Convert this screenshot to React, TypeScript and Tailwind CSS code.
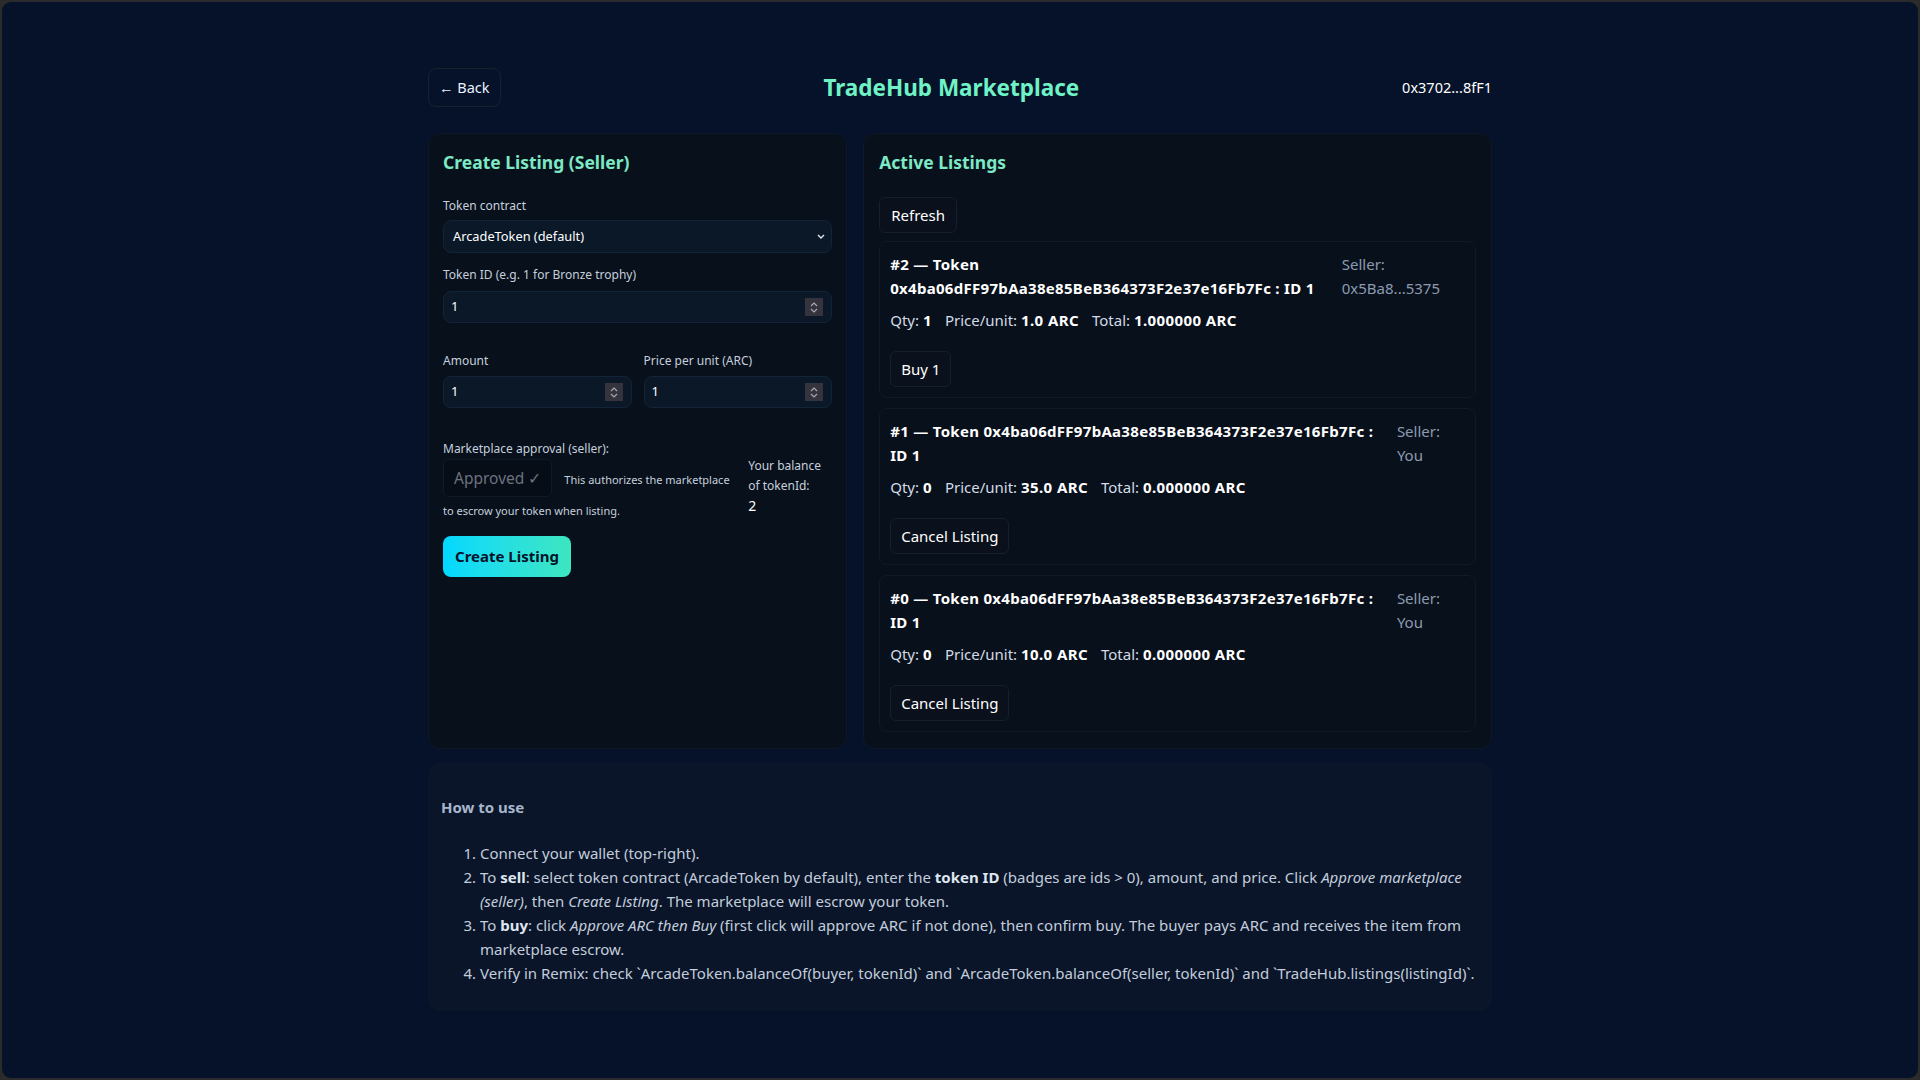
import React from "react";

function Spinner() {
  return (
    <div className="flex h-[18px] w-[18px] flex-col items-center justify-center gap-[1px] bg-[#35333d]">
      <svg width="8" height="5" viewBox="0 0 8 5" fill="none">
        <path d="M1 4L4 1L7 4" stroke="#a9a9b3" strokeWidth="1.2" />
      </svg>
      <svg width="8" height="5" viewBox="0 0 8 5" fill="none">
        <path d="M1 1L4 4L7 1" stroke="#a9a9b3" strokeWidth="1.2" />
      </svg>
    </div>
  );
}

function NumberField({ value }: { value: string }) {
  return (
    <div className="flex h-8 items-center rounded-lg border border-[#13243a] bg-[#0a1828] pl-[7px] pr-[8px]">
      <input
        readOnly
        value={value}
        className="w-full flex-1 bg-transparent text-[13px] text-white outline-none"
      />
      <Spinner />
    </div>
  );
}

type Listing = {
  id: number;
  qty: number;
  price: string;
  total: string;
  seller: string;
  action: string;
};

const listings: Listing[] = [
  { id: 2, qty: 1, price: "1.0", total: "1.000000", seller: "0x5Ba8...5375", action: "Buy 1" },
  { id: 1, qty: 0, price: "35.0", total: "0.000000", seller: "You", action: "Cancel Listing" },
  { id: 0, qty: 0, price: "10.0", total: "0.000000", seller: "You", action: "Cancel Listing" },
];

function ListingCard({ l }: { l: Listing }) {
  return (
    <div className="rounded-lg border border-[#101a28] bg-[#08101b] p-[10px]">
      <div className="flex gap-4">
        <div className="flex-1 text-[15px] font-bold leading-6 tracking-[0.3px] text-white">
          #{l.id} — Token 0x4ba06dFF97bAa38e85BeB364373F2e37e16Fb7Fc : ID 1
        </div>
        <div className="mr-[25px] text-[15px] leading-6 text-[#8d9bb0]">
          <div>Seller:</div>
          <div>{l.seller}</div>
        </div>
      </div>
      <div className="mt-2 flex text-[15px] leading-6 text-[#d3dbe6]">
        <span className="mr-[13px]">
          Qty: <b className="tracking-[0.4px] text-white">{l.qty}</b>
        </span>
        <span className="mr-[13px]">
          Price/unit: <b className="tracking-[0.4px] text-white">{l.price} ARC</b>
        </span>
        <span>
          Total: <b className="tracking-[0.4px] text-white">{l.total} ARC</b>
        </span>
      </div>
      <button className="mt-[19px] h-9 rounded-md border border-[#151f2e] bg-[#0b111c] px-[10px] text-[15px] text-white">
        {l.action}
      </button>
    </div>
  );
}

export default function App() {
  return (
    <div className="h-screen w-full bg-[#2b2b2b] p-[2px] font-['Noto_Sans',sans-serif]">
      <div className="h-full w-full overflow-hidden rounded-[9px] bg-[#061229]">
        <div className="mx-auto w-[1064px] pt-[66px]">
          {/* Header */}
          <div className="flex h-[39px] items-center justify-between">
            <button className="h-[39px] rounded-lg border border-[#16212f] px-[10px] text-[14.5px] text-[#e8f1ff]">
              ← Back
            </button>
            <h1 className="text-[22.5px] font-bold text-[#6ff3c6]">TradeHub Marketplace</h1>
            <div className="text-[14.5px] text-white">0x3702...8fF1</div>
          </div>

          <div className="mt-[26px] grid grid-cols-[2fr_3fr] gap-4">
            {/* Create listing */}
            <div className="rounded-xl border border-[#0e1826] bg-[#07101b] px-[14px] py-4">
              <h2 className="text-[17.5px] font-bold leading-6 text-[#7de9c5]">Create Listing (Seller)</h2>
              <div className="mt-[22px] text-[12px] leading-5 text-[#c6cfdb]">Token contract</div>
              <div className="mt-1 flex h-[33px] items-center justify-between rounded-lg border border-[#13243a] bg-[#0a1828] pl-[9px] pr-[6px]">
                <span className="text-[12.8px] text-white">ArcadeToken (default)</span>
                <svg width="8" height="5" viewBox="0 0 8 5" fill="none">
                  <path d="M1 1L4 4L7 1" stroke="#e5e7eb" strokeWidth="1.4" />
                </svg>
              </div>
              <div className="mt-3 text-[12px] leading-5 text-[#c6cfdb]">Token ID (e.g. 1 for Bronze trophy)</div>
              <div className="mt-[6px]">
                <NumberField value="1" />
              </div>
              <div className="mt-[28px] grid grid-cols-2 gap-3">
                <div>
                  <div className="text-[12px] leading-5 text-[#c6cfdb]">Amount</div>
                  <div className="mt-[5px]">
                    <NumberField value="1" />
                  </div>
                </div>
                <div>
                  <div className="text-[12px] leading-5 text-[#c6cfdb]">Price per unit (ARC)</div>
                  <div className="mt-[5px]">
                    <NumberField value="1" />
                  </div>
                </div>
              </div>

              <div className="mt-[31px] flex items-center gap-3">
                <div className="flex-1">
                  <div className="text-[12px] leading-5 text-[#c6cfdb]">Marketplace approval (seller):</div>
                  <div className="text-[11px] leading-5 text-[#c6cfdb]">
                    <button className="mb-[4px] mr-3 inline-block h-[38px] rounded-md border border-[#111a26] bg-[#070d16] px-[10px] text-[15.5px] text-[#6b7280]">
                      Approved ✓
                    </button>
                    This authorizes the marketplace to escrow your token when listing.
                  </div>
                </div>
                <div className="w-[84px] pt-[12px]">
                  <div className="text-[12px] leading-5 text-[#c6cfdb]">Your balance of tokenId:</div>
                  <div className="text-sm leading-5 text-white">2</div>
                </div>
              </div>

              <button className="mt-[15px] h-[41px] rounded-lg bg-gradient-to-r from-[#00d8ff] to-[#3de6c0] px-3 text-[15px] font-bold text-[#06122a]">
                Create Listing
              </button>
            </div>

            {/* Active listings */}
            <div className="rounded-xl border border-[#0e1826] bg-[#07101b] px-[15px] py-4">
              <h2 className="text-[17.5px] font-bold leading-6 text-[#7de9c5]">Active Listings</h2>
              <button className="mt-[23px] h-9 rounded-md border border-[#151f2e] bg-[#0b111c] px-[11px] text-[15px] text-white">
                Refresh
              </button>
              <div className="mt-2 flex flex-col gap-[10px]">
                {listings.map((l) => (
                  <ListingCard key={l.id} l={l} />
                ))}
              </div>
            </div>
          </div>

          {/* How to use */}
          <div className="mt-[13px] rounded-xl bg-[#0a1529] px-[13px] pb-[26px] pt-[35px]">
            <h3 className="text-[15px] font-bold leading-5 text-[#a8b6cc]">How to use</h3>
            <ol className="mt-6 list-decimal pl-[39px] text-[15px] leading-6 text-[#c3cddc]">
              <li>Connect your wallet (top-right).</li>
              <li>
                To <b className="text-[#dfe6f0]">sell</b>: select token contract (ArcadeToken by default), enter the{" "}
                <b className="text-[#dfe6f0]">token ID</b> (badges are ids &gt; 0), amount, and price. Click{" "}
                <i>Approve marketplace (seller)</i>, then <i>Create Listing</i>. The marketplace will escrow your token.
              </li>
              <li>
                To <b className="text-[#dfe6f0]">buy</b>: click <i>Approve ARC then Buy</i> (first click will approve ARC if
                not done), then confirm buy. The buyer pays ARC and receives the item from marketplace escrow.
              </li>
              <li>
                Verify in Remix: check `ArcadeToken.balanceOf(buyer, tokenId)` and `ArcadeToken.balanceOf(seller, tokenId)`
                and `TradeHub.listings(listingId)`.
              </li>
            </ol>
          </div>
        </div>
      </div>
    </div>
  );
}
